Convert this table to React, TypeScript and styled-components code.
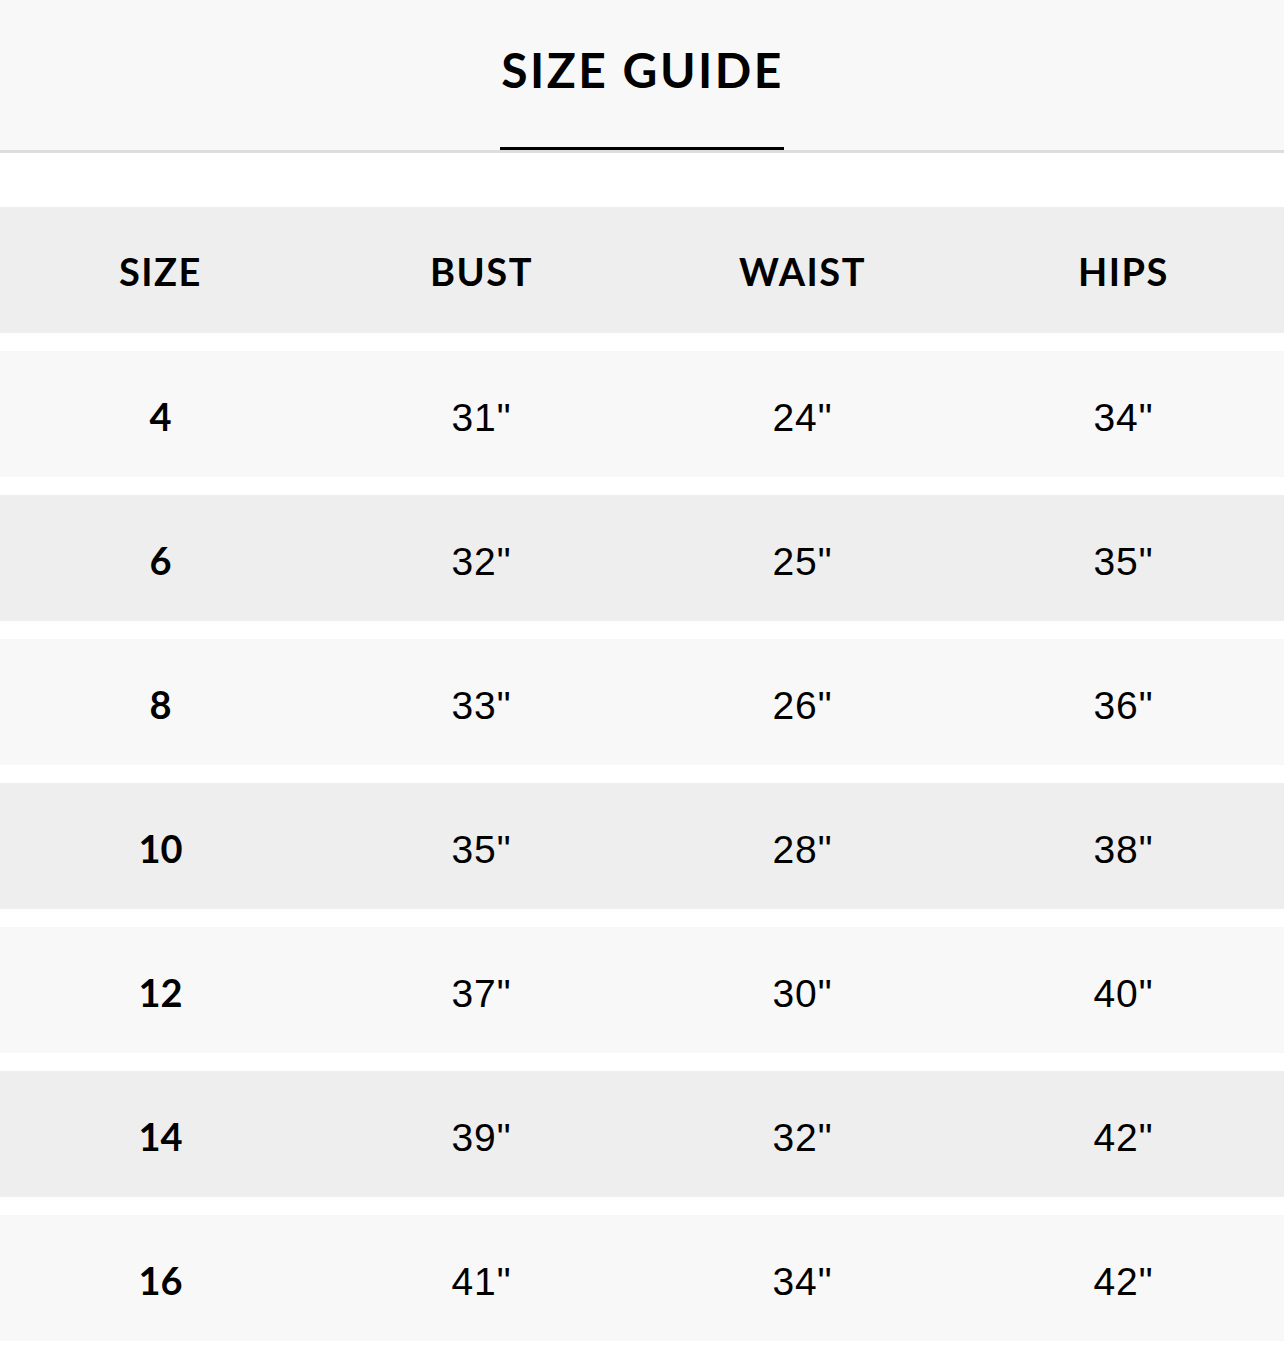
import React from "react";
import styled, { createGlobalStyle } from "styled-components";

const Global = createGlobalStyle`
  html, body { margin: 0; padding: 0; background: #ffffff; }
  body { font-family: Lato, "Liberation Sans", Arial, sans-serif; color: #000; }
`;

const Page = styled.div`
  width: 1284px;
  display: flex;
  flex-direction: column;
  background: #ffffff;
`;

const Header = styled.header`
  height: 150px;
  background: #f8f8f8;
  border-bottom: 3px solid #dddddd;
  display: flex;
  justify-content: center;
  align-items: flex-end;
`;

const Title = styled.h1`
  margin: 0;
  font-family: Lato, sans-serif;
  font-weight: 700;
  font-size: 48px;
  letter-spacing: 2.5px;
  line-height: 1;
  padding: 0 0 53px 1px;
  border-bottom: 3px solid #000;
`;

const Table = styled.div`
  display: flex;
  flex-direction: column;
  gap: 18px;
  padding: 54px 0 18px;
`;

const Row = styled.div<{ $shade: "light" | "dark" }>`
  height: 126px;
  display: grid;
  grid-template-columns: repeat(4, 1fr);
  align-items: center;
  background: ${(p) => (p.$shade === "dark" ? "#eeeeee" : "#f8f8f8")};
`;

const HeadCell = styled.div`
  text-align: center;
  font-family: Lato, sans-serif;
  font-weight: 700;
  font-size: 38px;
  letter-spacing: 1.5px;
  padding-top: 2px;
`;

const SizeCell = styled.div`
  text-align: center;
  font-family: Lato, sans-serif;
  font-weight: 700;
  font-size: 38px;
  padding-top: 4px;
`;

const ValueCell = styled.div`
  text-align: center;
  font-family: "Liberation Sans", Arial, sans-serif;
  font-weight: 400;
  font-size: 39px;
  letter-spacing: 1px;
  padding-top: 7px;
`;

const rows = [
  ["4", "31", "24", "34"],
  ["6", "32", "25", "35"],
  ["8", "33", "26", "36"],
  ["10", "35", "28", "38"],
  ["12", "37", "30", "40"],
  ["14", "39", "32", "42"],
  ["16", "41", "34", "42"],
];

export default function App() {
  return (
    <Page>
      <Global />
      <Header>
        <Title>SIZE GUIDE</Title>
      </Header>
      <Table>
        <Row $shade="dark">
          <HeadCell>SIZE</HeadCell>
          <HeadCell>BUST</HeadCell>
          <HeadCell>WAIST</HeadCell>
          <HeadCell>HIPS</HeadCell>
        </Row>
        {rows.map((r, i) => (
          <Row key={r[0]} $shade={i % 2 === 0 ? "light" : "dark"}>
            <SizeCell>{r[0]}</SizeCell>
            <ValueCell>{r[1]}"</ValueCell>
            <ValueCell>{r[2]}"</ValueCell>
            <ValueCell>{r[3]}"</ValueCell>
          </Row>
        ))}
      </Table>
    </Page>
  );
}
